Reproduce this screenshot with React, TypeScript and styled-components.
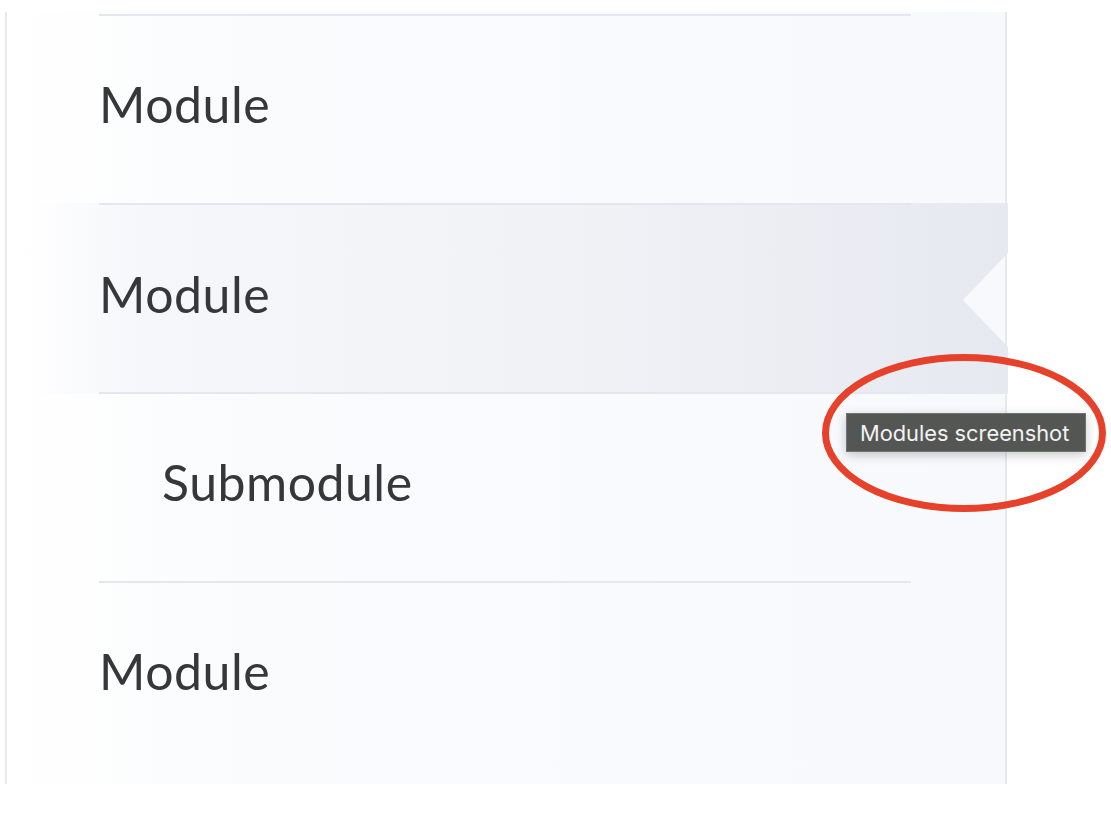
import React from "react";
import styled, { createGlobalStyle, css } from "styled-components";

const Global = createGlobalStyle`
  html, body { margin: 0; padding: 0; background: #ffffff; }
  body { font-family: Lato, "Noto Sans", sans-serif; }
`;

const Page = styled.div`
  position: relative;
  width: 1111px;
  height: 814px;
  box-sizing: border-box;
  padding: 12px 0 0 5px;
  overflow: hidden;
`;

const Panel = styled.nav`
  width: 1002px;
  height: 772px;
  box-sizing: border-box;
  border-left: 2px solid #e9eaec;
  border-right: 2px solid #e6e9f0;
  background: linear-gradient(to right, #ffffff 0%, #fafbfd 25%, #f8f9fc 100%);
  display: flex;
  flex-direction: column;
  padding-top: 2px;
`;

const line = "linear-gradient(#e4e7ee, #e4e7ee)";

const Item = styled.div<{ $active?: boolean; $level?: number }>`
  flex-shrink: 0;
  height: 189px;
  box-sizing: border-box;
  display: flex;
  align-items: center;
  padding-left: ${(p) => 92 + (p.$level || 0) * 63}px;
  padding-bottom: 10px;
  font-size: 50px;
  color: #363739;
  letter-spacing: 0.5px;
  background: ${line} 92px 0 / 812px 2px no-repeat;
  ${(p) =>
    p.$active &&
    css`
      height: 191px;
      margin-bottom: -2px;
      margin-right: -3px;
      background:
        ${line} 92px 0 / 812px 2px no-repeat,
        ${line} 92px 100% / 812px 2px no-repeat,
        linear-gradient(to right, rgba(255, 255, 255, 0) 2%, #f6f7fa 14%, #f0f2f6 55%, #e6e9f0 100%);
      clip-path: polygon(
        0 0,
        100% 0,
        100% 50px,
        calc(100% - 45px) 97px,
        100% 144px,
        100% 100%,
        0 100%
      );
    `}
`;

const Tooltip = styled.div`
  position: absolute;
  left: 846px;
  top: 413px;
  width: 240px;
  height: 39px;
  box-sizing: border-box;
  background: #545654;
  border: 1px solid #727473;
  box-shadow: 0 3px 10px rgba(0, 0, 0, 0.22);
  color: #f2f2f2;
  font-family: Inter, "Liberation Sans", Arial, sans-serif;
  font-size: 21.8px;
  display: flex;
  align-items: center;
  padding-left: 13px;
  white-space: nowrap;
`;

const Marker = styled.svg`
  position: absolute;
  left: 815px;
  top: 345px;
  width: 300px;
  height: 175px;
  overflow: visible;
`;

const items = [
  { label: "Module" },
  { label: "Module", active: true },
  { label: "Submodule", level: 1 },
  { label: "Module" },
];

export default function App() {
  return (
    <>
      <Global />
      <Page>
        <Panel>
          {items.map((it, i) => (
            <Item key={i} $active={it.active} $level={it.level}>
              {it.label}
            </Item>
          ))}
        </Panel>
        <Tooltip>Modules screenshot</Tooltip>
        <Marker viewBox="0 0 300 175">
          <ellipse cx="149" cy="88" rx="138.5" ry="75.5" fill="none" stroke="#e5412b" strokeWidth="7" />
        </Marker>
      </Page>
    </>
  );
}
